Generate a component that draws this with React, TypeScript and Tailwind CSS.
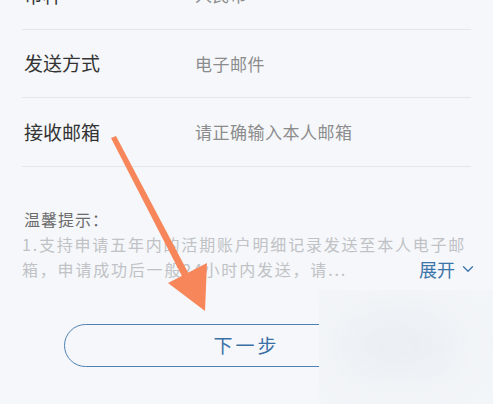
import { ChevronDown } from "lucide-react";

const rows = [
  { label: "币种", value: "人民币" },
  { label: "发送方式", value: "电子邮件" },
  { label: "接收邮箱", value: "请正确输入本人邮箱" },
];

export default function App() {
  return (
    <div
      className="relative w-[493px] h-[404px] overflow-hidden bg-[#f5f7fa]"
      style={{ fontFamily: '"Noto Sans CJK SC", "Noto Sans", sans-serif' }}
    >
      {/* form rows */}
      <div className="-mt-[39px] px-[22px]">
        {rows.map((r) => (
          <div key={r.label} className="flex items-center h-[68.5px] border-b border-[#e3e7ec]">
            <span className="w-[173px] pl-[2px] text-[19px] text-[#333]">{r.label}</span>
            <span className="text-[17px] tracking-[0.5px] text-[#8c8c8c]">{r.value}</span>
          </div>
        ))}
      </div>

      {/* tips */}
      <div className="px-[22px] pt-[40px]">
        <div className="pl-[2px] text-[16px] leading-[25px] tracking-[1px] text-[#6b6b6b]">温馨提示：</div>
        <div className="text-[16px] leading-[25px] tracking-[1.8px] text-[#c0c2c5]">
          1.支持申请五年内的活期账户明细记录发送至本人电子邮
        </div>
        <div className="flex items-center justify-between text-[16px] leading-[25px]">
          <span className="tracking-[1.8px] text-[#c0c2c5]">箱，申请成功后一般24小时内发送，请...</span>
          <span className="-mr-[6px] flex items-center gap-[4px] text-[18px] text-[#3b74a8]">
            展开
            <ChevronDown className="w-[18px] h-[18px]" strokeWidth={1.7} />
          </span>
        </div>
      </div>

      {/* button */}
      <div className="px-[64px] pt-[42px]">
        <button className="w-full h-[43px] rounded-full border border-[#4f82b2] text-[19px] tracking-[3px] text-[#3b70a6]">
          下一步
        </button>
      </div>

      {/* orange annotation arrow */}
      <svg className="absolute left-0 top-0 pointer-events-none" width="493" height="404">
        <polygon points="111,138 116,136 192,280 186,284" fill="#f7875a" />
        <polygon points="168,283 207,263 205,311" fill="#f7875a" />
      </svg>

      {/* blurred watermark patch */}
      <div className="absolute left-[319px] top-[290px] w-[174px] h-[114px] bg-[#f3f6f9] overflow-hidden">
        <div className="absolute left-[20px] top-[25px] w-[120px] h-[60px] rounded-full bg-[#e9edf2] blur-xl" />
      </div>
    </div>
  );
}
